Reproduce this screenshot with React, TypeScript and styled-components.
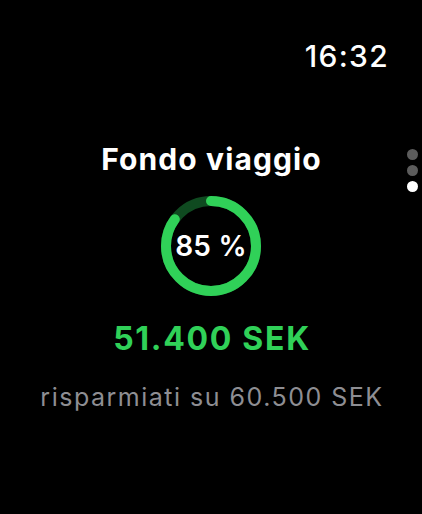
import React from "react";
import styled, { createGlobalStyle } from "styled-components";

const Global = createGlobalStyle`
  html, body { margin: 0; padding: 0; background: #000; }
  body { font-family: Inter, "Noto Sans", "Liberation Sans", sans-serif; -webkit-font-smoothing: antialiased; }
`;

const Screen = styled.div`
  position: relative;
  width: 422px;
  height: 514px;
  background: #000;
  color: #fff;
  overflow: hidden;
  display: flex;
  flex-direction: column;
`;

const StatusBar = styled.div`
  display: flex;
  justify-content: flex-end;
  padding: 39px 33px 0 0;
  height: 34px;
`;

const Time = styled.div`
  font-size: 30px;
  font-weight: 500;
  line-height: 34px;
  letter-spacing: 1.3px;
`;

const Content = styled.div`
  display: flex;
  flex-direction: column;
  align-items: center;
  margin-top: 68px;
`;

const Title = styled.div`
  font-size: 30px;
  font-weight: 700;
  line-height: 36px;
  letter-spacing: 1.1px;
  margin-right: -1px;
`;

const RingWrap = styled.div`
  position: relative;
  width: 100px;
  height: 100px;
  margin-top: 19px;
  display: flex;
  align-items: center;
  justify-content: center;
`;

const RingSvg = styled.svg`
  position: absolute;
  inset: 0;
`;

const Percent = styled.div`
  position: relative;
  font-size: 28px;
  font-weight: 600;
  line-height: 1;
  letter-spacing: 0.2px;
`;

const Amount = styled.div`
  margin-top: 24px;
  font-size: 32px;
  font-weight: 700;
  line-height: 38px;
  letter-spacing: 1.7px;
  margin-right: -2px;
  color: #30d158;
`;

const Subtitle = styled.div`
  margin-top: 24px;
  font-size: 25px;
  font-weight: 400;
  line-height: 30px;
  letter-spacing: 1.5px;
  margin-right: -2px;
  color: #8e8e93;
`;

const PageDots = styled.div`
  position: absolute;
  right: 4px;
  top: 149px;
  display: flex;
  flex-direction: column;
  gap: 5px;
`;

const Dot = styled.div<{ $active?: boolean }>`
  width: 11px;
  height: 11px;
  border-radius: 50%;
  background: ${(p) => (p.$active ? "#fff" : "#5c5c5c")};
`;

const Ring: React.FC<{ progress: number }> = ({ progress }) => {
  const r = 45;
  const c = 2 * Math.PI * r;
  return (
    <RingSvg width="100" height="100" viewBox="0 0 100 100">
      <circle cx="50" cy="50" r={r} fill="none" stroke="#0f4a20" strokeWidth="10" />
      <circle
        cx="50"
        cy="50"
        r={r}
        fill="none"
        stroke="#30d158"
        strokeWidth="10"
        strokeLinecap="round"
        strokeDasharray={`${c * progress} ${c}`}
        transform="rotate(-90 50 50)"
      />
    </RingSvg>
  );
};

export default function App() {
  return (
    <>
      <Global />
      <Screen>
        <StatusBar>
          <Time>16:32</Time>
        </StatusBar>
        <Content>
          <Title>Fondo viaggio</Title>
          <RingWrap>
            <Ring progress={0.85} />
            <Percent>85 %</Percent>
          </RingWrap>
          <Amount>51.400 SEK</Amount>
          <Subtitle>risparmiati su 60.500 SEK</Subtitle>
        </Content>
        <PageDots>
          <Dot />
          <Dot />
          <Dot $active />
        </PageDots>
      </Screen>
    </>
  );
}
